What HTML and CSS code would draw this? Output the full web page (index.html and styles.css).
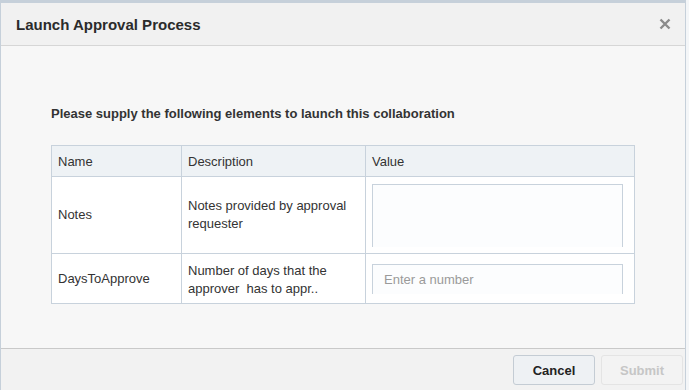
FILE: index.html
```html
<!DOCTYPE html>
<html lang="en">
<head>
  <meta charset="UTF-8">
  <title>Launch Approval Process</title>
  <link rel="stylesheet" href="styles.css">
</head>
<body>
  <div class="dialog">
    <header class="dialog-header">
      <h1>Launch Approval Process</h1>
      <span class="close-btn" title="Close">
        <svg width="12" height="12" viewBox="0 0 12 12">
          <path d="M1.5 1.5 L10.5 10.5 M10.5 1.5 L1.5 10.5" stroke="#8c8c8c" stroke-width="2.4" fill="none"/>
        </svg>
      </span>
    </header>

    <div class="dialog-body">
      <p class="intro">Please supply the following elements to launch this collaboration</p>
      <table class="params">
        <thead>
          <tr>
            <th class="col-name">Name</th>
            <th class="col-desc">Description</th>
            <th class="col-value">Value</th>
          </tr>
        </thead>
        <tbody>
          <tr class="row-notes">
            <td>Notes</td>
            <td>Notes provided by approval requester</td>
            <td><textarea class="field field-area"></textarea></td>
          </tr>
          <tr class="row-days">
            <td>DaysToApprove</td>
            <td>Number of days that the approver&nbsp; has to appr..</td>
            <td><input type="text" class="field field-input" placeholder="Enter a number"></td>
          </tr>
        </tbody>
      </table>
    </div>

    <footer class="dialog-footer">
      <button class="btn btn-cancel">Cancel</button>
      <button class="btn btn-submit" disabled>Submit</button>
    </footer>
  </div>
</body>
</html>
```

FILE: styles.css
```css
* { box-sizing: border-box; }
html, body {
  margin: 0;
  padding: 0;
  background: #f4f6f8;
  font-family: "Liberation Sans", Arial, sans-serif;
  color: #333;
}

.dialog {
  width: 686px;
  height: 390px;
  border: 1px solid #c6d0da;
  border-top-width: 3px;
  border-bottom: none;
  background: #f7f7f7;
  display: flex;
  flex-direction: column;
}

/* Header */
.dialog-header {
  height: 43px;
  display: flex;
  align-items: center;
  justify-content: space-between;
  padding: 0 14px 0 15px;
  background: #f1f1f1;
  border-bottom: 1px solid #d6d6d6;
}
.dialog-header h1 {
  margin: 0;
  font-size: 15px;
  font-weight: bold;
  color: #2b2b2b;
}
.close-btn { display: flex; cursor: pointer; }

/* Body */
.dialog-body {
  flex: 1;
  padding: 60px 51px 0 50px;
  background: #f7f7f7;
}
.intro {
  margin: 0 0 24px;
  font-size: 13px;
  font-weight: bold;
  color: #333;
}

.params {
  width: 584px;
  border-collapse: collapse;
  font-size: 13px;
  background: #fff;
}
.params th,
.params td {
  border: 1px solid #c8d2dc;
  text-align: left;
  vertical-align: middle;
  padding: 0 6px;
  color: #333;
  line-height: 18px;
}
.params th {
  font-weight: normal;
  background: #eef2f5;
  height: 31px;
  padding-top: 1px;
}
.col-name { width: 130px; }
.col-desc { width: 184px; }
.row-notes td { height: 77px; }
.row-days td { height: 50px; }
.row-days td:nth-child(2) { padding-top: 2px; }
.params td:last-child { padding-right: 11px; }

.field {
  display: block;
  width: 100%;
  margin: 0;
  border: 1px solid #c8d2dc;
  border-bottom: none;
  background: #fcfdfe;
  font-family: inherit;
  font-size: 13px;
  color: #333;
  outline: none;
}
.field-area {
  height: 63px;
  resize: none;
}
.field-input {
  height: 30px;
  margin-top: 1px;
  padding: 0 11px;
}
.field-input::placeholder { color: #9a9a9a; }

/* Footer */
.dialog-footer {
  height: 42px;
  display: flex;
  justify-content: flex-end;
  align-items: flex-start;
  gap: 6px;
  padding: 6px 2px 0 0;
  background: #f2f2f2;
  border-top: 1px solid #c9c9c9;
}
.btn {
  width: 82px;
  height: 30px;
  border-radius: 3px;
  font-family: inherit;
  font-size: 13px;
  font-weight: bold;
}
.btn-cancel {
  background: #eef1f4;
  border: 1px solid #c4ccd4;
  color: #222;
  cursor: pointer;
}
.btn-submit {
  background: #f3f3f3;
  border: 1px solid #e4e4e4;
  color: #c6c6c6;
}
```
